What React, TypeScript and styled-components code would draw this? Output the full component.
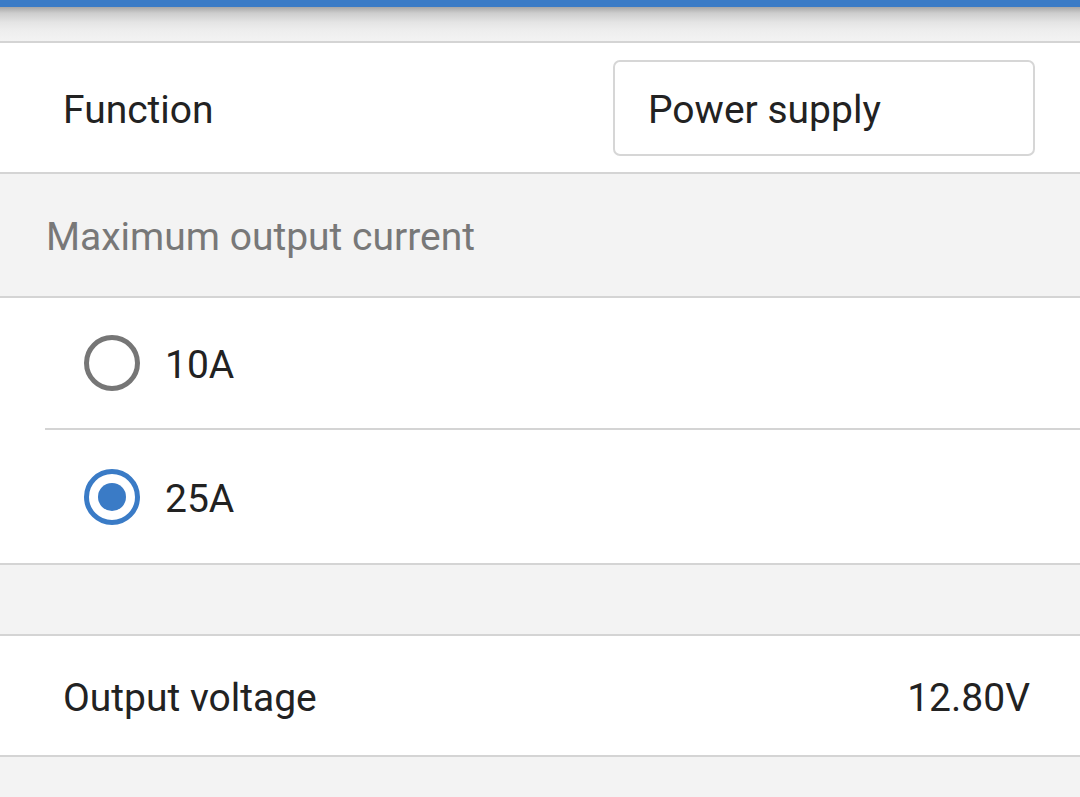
import React from "react";
import styled, { createGlobalStyle } from "styled-components";

const GlobalStyle = createGlobalStyle`
  html, body { margin: 0; padding: 0; background: #f3f3f3; }
  body { font-family: Roboto, "Noto Sans", "Liberation Sans", sans-serif; }
  * { box-sizing: border-box; }
`;

const Page = styled.div`
  width: 1080px;
  height: 797px;
  overflow: hidden;
  display: flex;
  flex-direction: column;
  background: #f3f3f3;
`;

const TopBar = styled.div`
  height: 7px;
  background: #3a7bc6;
  flex: none;
`;

const Shade = styled.div`
  height: 36px;
  flex: none;
  background: linear-gradient(
    to bottom,
    #a6a6a6 0%,
    #cdcdcd 18%,
    #e4e4e4 45%,
    #eeeeee 70%,
    #f3f3f3 100%
  );
  border-bottom: 2px solid #d4d4d4;
`;

const Row = styled.div<{ $h: number; $pl: number; $pr: number }>`
  height: ${(p) => p.$h}px;
  flex: none;
  display: flex;
  align-items: center;
  justify-content: space-between;
  padding: 0 ${(p) => p.$pr}px 0 ${(p) => p.$pl}px;
  background: #ffffff;
  border-bottom: 2px solid #d4d4d4;
`;

const Label = styled.span`
  font-size: 39px;
  color: #222222;
  line-height: 1;
  padding-top: 5px;
`;

const Value = styled(Label)``;

const Select = styled.div`
  width: 422px;
  height: 96px;
  border: 2px solid #d6d6d6;
  border-radius: 7px;
  display: flex;
  align-items: center;
  padding: 5px 0 0 33px;
  font-size: 39px;
  line-height: 1;
  color: #222222;
  background: #fff;
`;

const SectionHeader = styled.div`
  height: 124px;
  flex: none;
  display: flex;
  align-items: center;
  padding: 4px 0 0 46px;
  background: #f3f3f3;
  border-bottom: 2px solid #d4d4d4;
  font-size: 39px;
  line-height: 1;
  color: #787878;
`;

const RadioGroup = styled.div`
  flex: none;
  background: #fff;
  border-bottom: 2px solid #d4d4d4;
  display: flex;
  flex-direction: column;
`;

const RadioOption = styled.div<{ $h: number }>`
  height: ${(p) => p.$h}px;
  display: flex;
  align-items: center;
  gap: 25px;
  padding-left: 84px;
`;

const Divider = styled.div`
  height: 2px;
  margin-left: 45px;
  background: #d4d4d4;
`;

const RadioCircle = styled.span<{ $checked: boolean }>`
  width: 56px;
  height: 56px;
  border-radius: 50%;
  border: 5px solid ${(p) => (p.$checked ? "#3a7bc6" : "#767676")};
  display: flex;
  align-items: center;
  justify-content: center;
  flex: none;
  &::after {
    content: "";
    display: ${(p) => (p.$checked ? "block" : "none")};
    width: 28px;
    height: 28px;
    border-radius: 50%;
    background: #3a7bc6;
  }
`;

const Spacer = styled.div<{ $h: number }>`
  height: ${(p) => p.$h}px;
  flex: none;
  background: #f3f3f3;
  border-bottom: 2px solid #d4d4d4;
`;

const Fill = styled.div`
  flex: 1;
  background: #f3f3f3;
`;

export default function App() {
  const options = [
    { label: "10A", checked: false, h: 130 },
    { label: "25A", checked: true, h: 133 },
  ];
  return (
    <>
      <GlobalStyle />
      <Page>
        <TopBar />
        <Shade />
        <Row $h={131} $pl={63} $pr={45}>
          <Label>Function</Label>
          <Select>Power supply</Select>
        </Row>
        <SectionHeader>Maximum output current</SectionHeader>
        <RadioGroup>
          {options.map((o, i) => (
            <React.Fragment key={o.label}>
              {i > 0 && <Divider />}
              <RadioOption $h={o.h}>
                <RadioCircle $checked={o.checked} />
                <Label>{o.label}</Label>
              </RadioOption>
            </React.Fragment>
          ))}
        </RadioGroup>
        <Spacer $h={71} />
        <Row $h={121} $pl={63} $pr={50}>
          <Label>Output voltage</Label>
          <Value>12.80V</Value>
        </Row>
        <Fill />
      </Page>
    </>
  );
}
